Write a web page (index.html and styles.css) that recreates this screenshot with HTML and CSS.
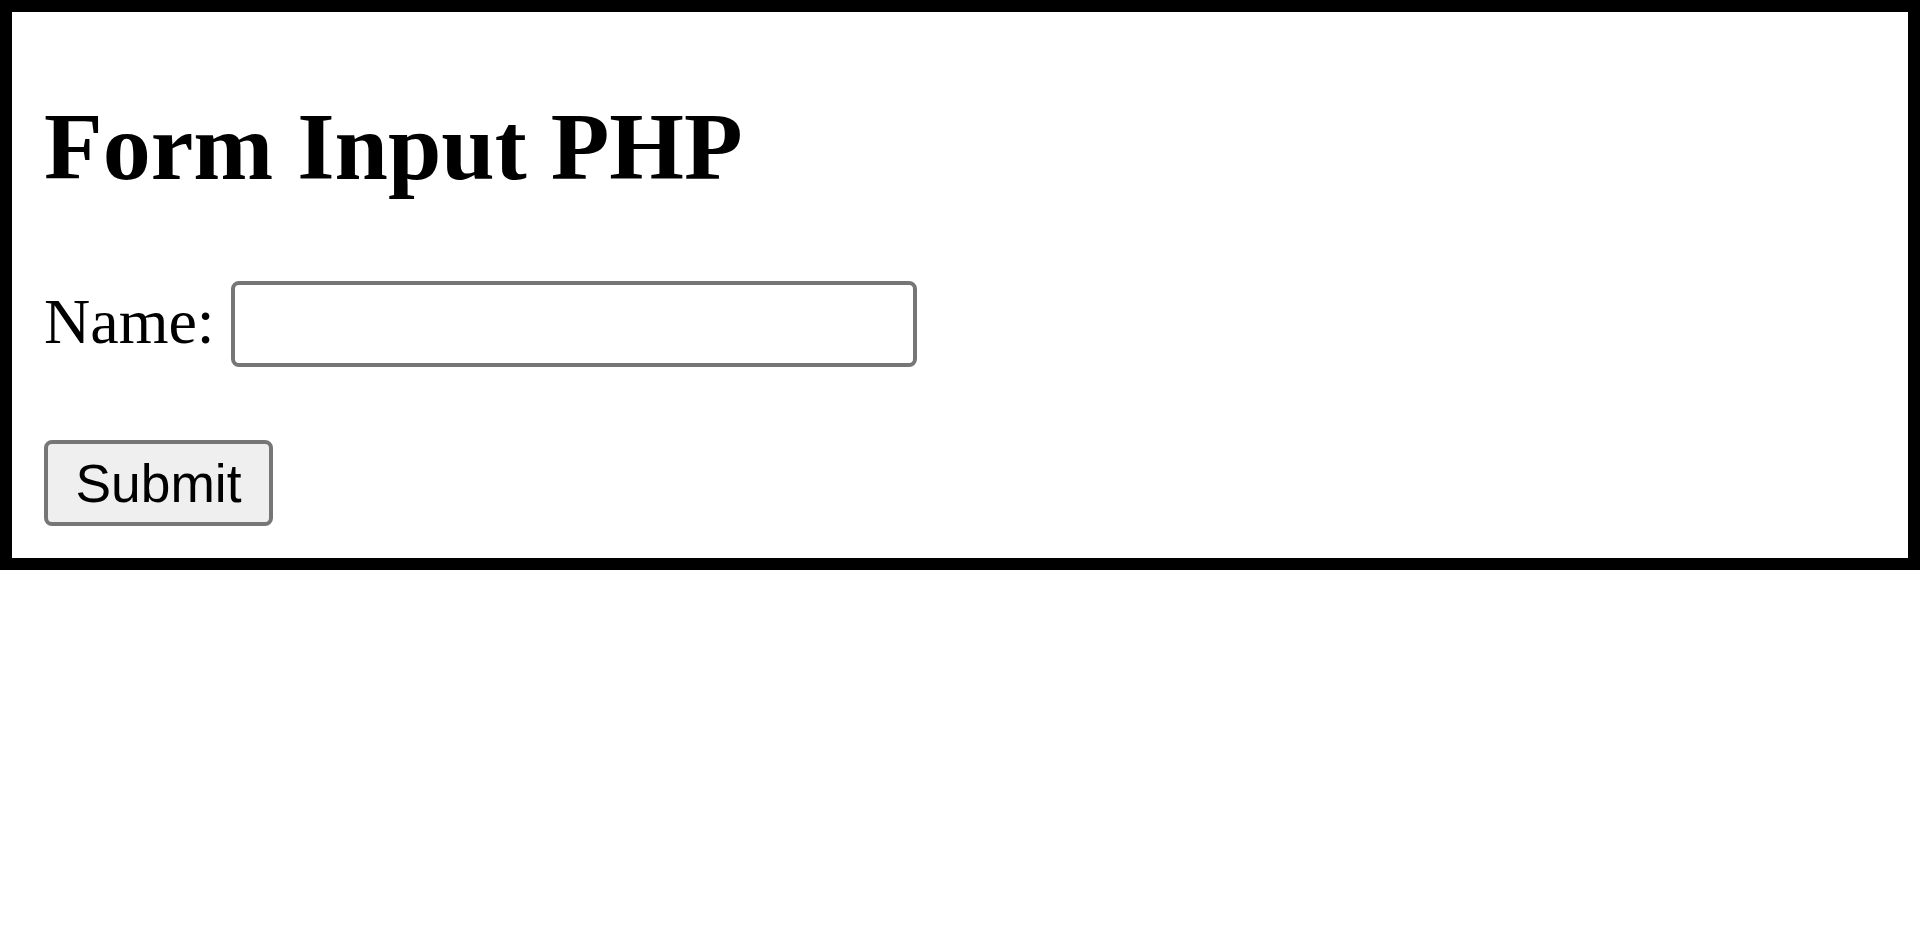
FILE: index.html
```html
<!DOCTYPE html>
<html>
<head>
<meta charset="utf-8">
<title>Form Input PHP</title>
<link rel="stylesheet" href="styles.css">
</head>
<body>
<div class="box">
  <h1 class="title">Form Input PHP</h1>
  <form class="form">
    <div class="row">
      <label class="label" for="name">Name:</label>
      <input class="field" type="text" id="name" name="name">
    </div>
    <button class="submit" type="submit">Submit</button>
  </form>
</div>
</body>
</html>
```

FILE: styles.css
```css
html, body {
  margin: 0;
  padding: 0;
  background: #fff;
}
body {
  font-family: "Liberation Serif", "Times New Roman", serif;
  color: #000;
}
.box {
  border: 12px solid #000;
  padding: 0 32px 32px 32px;
}
.title {
  margin: 82px 0 81px 0;
  font-size: 96px;
  font-weight: bold;
  line-height: 106px;
}
.form {
  margin: 0;
  display: flex;
  flex-direction: column;
  align-items: flex-start;
}
.row {
  display: flex;
  align-items: flex-start;
}
.label {
  font-size: 64px;
  line-height: 64px;
  margin-top: 9px;
  margin-right: 16px;
}
.field {
  box-sizing: border-box;
  width: 686px;
  height: 86px;
  margin: 0;
  border: 4px solid #767676;
  border-radius: 8px;
  background: #fff;
  padding: 0 8px;
  font-family: "Liberation Sans", Arial, sans-serif;
  font-size: 53px;
  outline: none;
}
.submit {
  box-sizing: border-box;
  margin: 73px 0 0 0;
  width: 229px;
  height: 86px;
  padding: 0;
  border: 4px solid #767676;
  border-radius: 8px;
  background: #efefef;
  color: #000;
  font-family: "Liberation Sans", Arial, sans-serif;
  font-size: 53.33px;
  line-height: normal;
}
```
